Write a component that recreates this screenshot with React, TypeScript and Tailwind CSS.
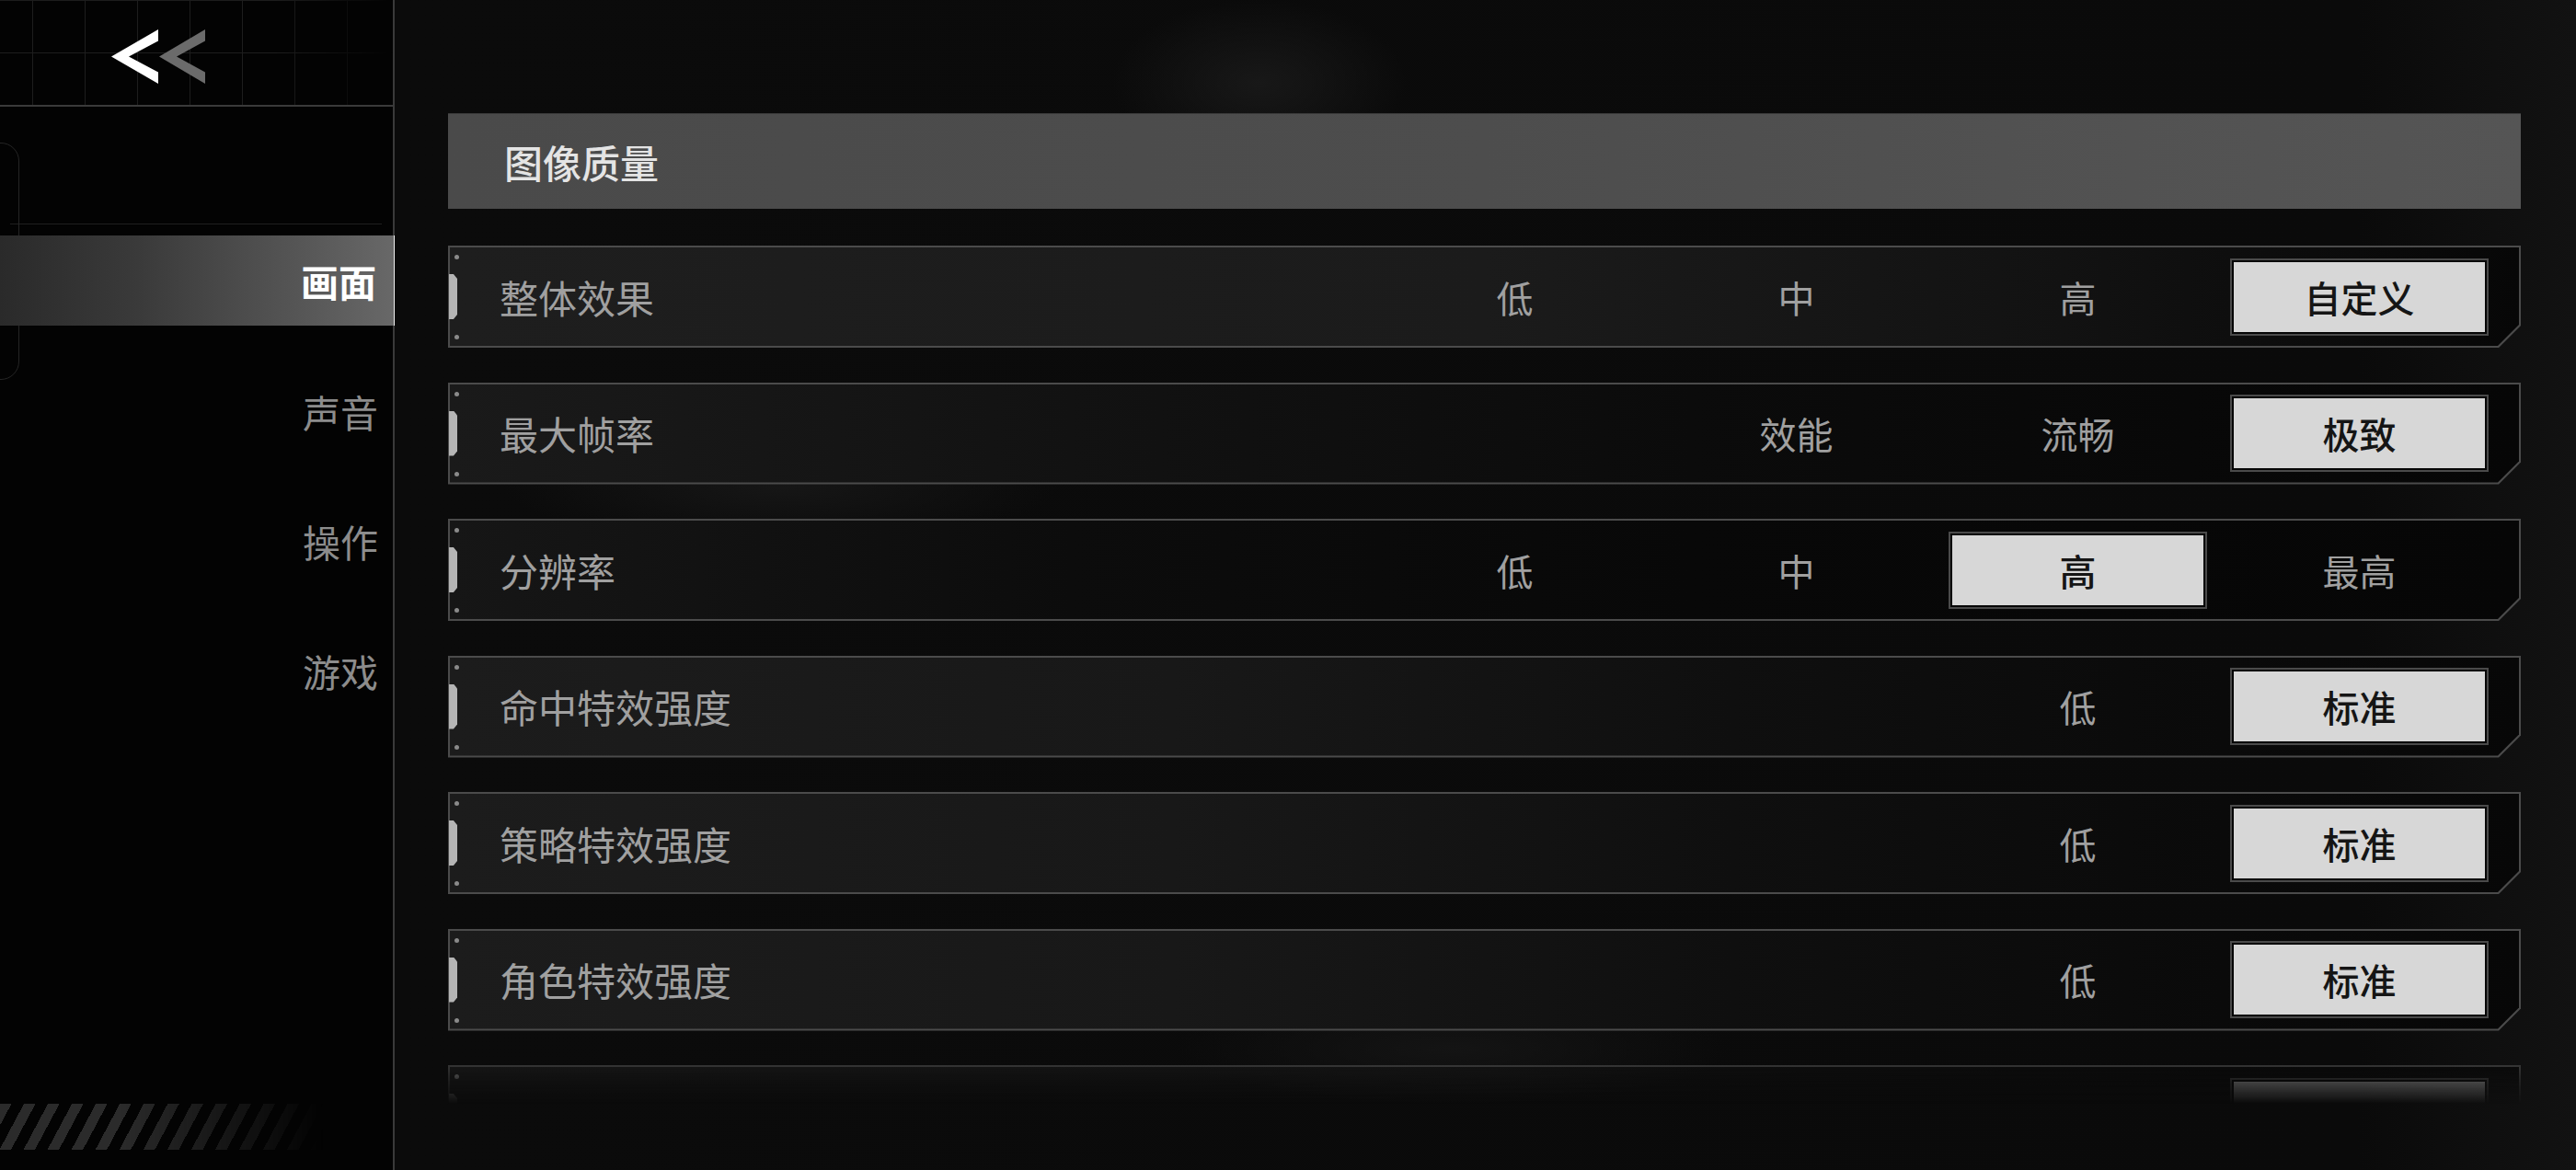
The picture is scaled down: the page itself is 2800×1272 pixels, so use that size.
import React from 'react';

type Row = {
  label: string;
  options: string[];
  selected: number;
  bg: string;
};

const rows: Row[] = [
  {
    label: '整体效果',
    options: ['低', '中', '高', '自定义'],
    selected: 3,
    bg: 'bg-[linear-gradient(to_right,#1e1e1e_0%,#1b1b1b_50%,#121212_78%,#070707_100%)]',
  },
  {
    label: '最大帧率',
    options: ['效能', '流畅', '极致'],
    selected: 2,
    bg: 'bg-[linear-gradient(to_right,#1a1a1a_0%,#121212_30%,#0b0b0b_60%,#060606_100%)]',
  },
  {
    label: '分辨率',
    options: ['低', '中', '高', '最高'],
    selected: 2,
    bg: 'bg-[linear-gradient(to_right,#161616_0%,#0c0c0c_30%,#080808_60%,#060606_100%)]',
  },
  {
    label: '命中特效强度',
    options: ['低', '标准'],
    selected: 1,
    bg: 'bg-[linear-gradient(to_right,#1c1c1c_0%,#181818_35%,#0f0f0f_62%,#070707_100%)]',
  },
  {
    label: '策略特效强度',
    options: ['低', '标准'],
    selected: 1,
    bg: 'bg-[linear-gradient(to_right,#1c1c1c_0%,#181818_35%,#0f0f0f_62%,#070707_100%)]',
  },
  {
    label: '角色特效强度',
    options: ['低', '标准'],
    selected: 1,
    bg: 'bg-[linear-gradient(to_right,#1c1c1c_0%,#181818_35%,#0f0f0f_62%,#070707_100%)]',
  },
];

function Option({ text, selected }: { text: string; selected: boolean }) {
  if (selected) {
    return (
      <div className="w-[281px] h-[84px] border-2 border-[#4a4a4a] bg-[#050505] p-[2px] box-border">
        <div className="w-full h-full bg-[#d7d7d7] flex items-center justify-center text-[40px] leading-none font-medium text-[#151515]">
          {text}
        </div>
      </div>
    );
  }
  return (
    <div className="w-[281px] h-[84px] flex items-center justify-center text-[40px] leading-none text-[#a0a0a0]">
      {text}
    </div>
  );
}

function SettingRow({ row, faded }: { row: Row; faded?: boolean }) {
  return (
    <div
      className={
        'relative h-[111px] shrink-0 p-[2px] bg-[#4b4b4b] [clip-path:polygon(0_0,100%_0,100%_calc(100%_-_24px),calc(100%_-_24px)_100%,0_100%)] ' +
        (faded
          ? '[mask-image:linear-gradient(to_bottom,rgba(0,0,0,0.65)_0px,rgba(0,0,0,0.25)_20px,transparent_42px)]'
          : '')
      }
    >
      <div
        className={
          'h-full flex items-center [clip-path:polygon(0_0,100%_0,100%_calc(100%_-_23px),calc(100%_-_23px)_100%,0_100%)] ' +
          row.bg
        }
      >
        <div className="pl-[54px] text-[42px] leading-none text-[#a0a0a0]">{row.label}</div>
        <div className="flex-1 flex justify-end items-center gap-[25px] pr-[33px]">
          {row.options.map((o, i) => (
            <Option key={i} text={o} selected={i === row.selected} />
          ))}
        </div>
      </div>
      <div className="absolute left-[7px] top-[10px] w-[5px] h-[5px] rounded-full bg-[#8a8a8a]" />
      <div className="absolute left-[7px] bottom-[9px] w-[5px] h-[5px] rounded-full bg-[#8a8a8a]" />
      <div className="absolute left-[1px] top-[31px] w-[9px] h-[49px] bg-[#b5b5b5] [clip-path:polygon(0_0,55%_0,100%_10%,100%_90%,55%_100%,0_100%)]" />
    </div>
  );
}

export default function App() {
  return (
    <div className="w-full h-screen flex overflow-hidden bg-[#0a0a0a] font-['Noto_Sans_CJK_SC','Noto_Sans',sans-serif]">
      <aside className="relative w-[429px] shrink-0 h-full bg-[#030303] border-r-2 border-[#3a3a3a] flex flex-col">
        <div className="relative h-[116px] shrink-0 border-b-2 border-[#3a3a3a]">
          <div className="absolute inset-0 bg-[linear-gradient(to_right,#1d1d1d_1px,transparent_1px),linear-gradient(to_bottom,#1d1d1d_1px,transparent_1px)] bg-[size:57px_57px] bg-[position:35px_0px] [mask-image:linear-gradient(to_right,black_70%,transparent_100%)]" />
          <div className="relative pl-[121px] pt-[32px]">
            <svg width="103" height="60" viewBox="0 0 103 60">
              <polygon points="0,29.5 51,0 51,12.5 19,29.5 51,46.5 51,59" fill="#ffffff" />
              <polygon points="52,29.5 102,0 102,12.5 71,29.5 102,46.5 102,59" fill="#6b6b6b" />
            </svg>
          </div>
        </div>

        <div className="absolute left-[-22px] top-[155px] w-[43px] h-[258px] rounded-[20px] border border-[#252525]" />

        <div className="mt-[127px] ml-[11px] w-[404px] h-px bg-[#1f1f1f]" />

        <div className="relative mt-[12px] mr-[-4px] h-[98px] flex items-center justify-end pr-[19px] bg-[linear-gradient(to_right,#2a2a2a_0%,#3a3a3a_35%,#555555_75%,#686868_100%)] border-r-[3px] border-[#f0f0f0]">
          <span className="text-[41px] leading-none font-bold text-white">画面</span>
        </div>

        <nav className="flex flex-col items-end pr-[16px] mt-[73px] gap-[101px]">
          <span className="h-[40px] text-[41px] leading-none text-[#8c8c8c]">声音</span>
          <span className="h-[40px] text-[41px] leading-none text-[#8c8c8c]">操作</span>
          <span className="h-[40px] text-[41px] leading-none text-[#8c8c8c]">游戏</span>
        </nav>

        <div className="mt-auto mb-[22px] w-[370px] h-[50px] bg-[repeating-linear-gradient(118deg,#2b2b2b_0px,#2b2b2b_11px,transparent_11px,transparent_23px)] [mask-image:linear-gradient(to_right,black_35%,transparent_95%)]" />
      </aside>

      <main className="relative flex-1 h-full overflow-hidden pl-[58px] pr-[60px] pt-[123px] flex flex-col bg-[radial-gradient(ellipse_160px_90px_at_940px_90px,#181818,transparent),radial-gradient(ellipse_300px_60px_at_420px_530px,#161616,transparent),radial-gradient(ellipse_300px_60px_at_1150px_1140px,#141414,transparent),linear-gradient(to_right,#0b0b0b,#0a0a0a_90%,#121212)]">
        <div className="h-[104px] shrink-0 flex items-center pl-[61px] bg-[linear-gradient(to_right,#4a4a4a_0%,#4d4d4d_50%,#555555_100%)] border-t border-[#3a3a3a]">
          <span className="text-[42px] leading-none text-[#e4e4e4] font-medium">图像质量</span>
        </div>

        <div className="mt-[40px] flex flex-col gap-[37.5px]">
          {rows.map((r, i) => (
            <SettingRow key={i} row={r} />
          ))}
          <SettingRow
            faded
            row={{
              label: '',
              options: ['', ''],
              selected: 1,
              bg: 'bg-[linear-gradient(to_right,#1c1c1c_0%,#181818_35%,#0f0f0f_62%,#070707_100%)]',
            }}
          />
        </div>
      </main>
    </div>
  );
}
